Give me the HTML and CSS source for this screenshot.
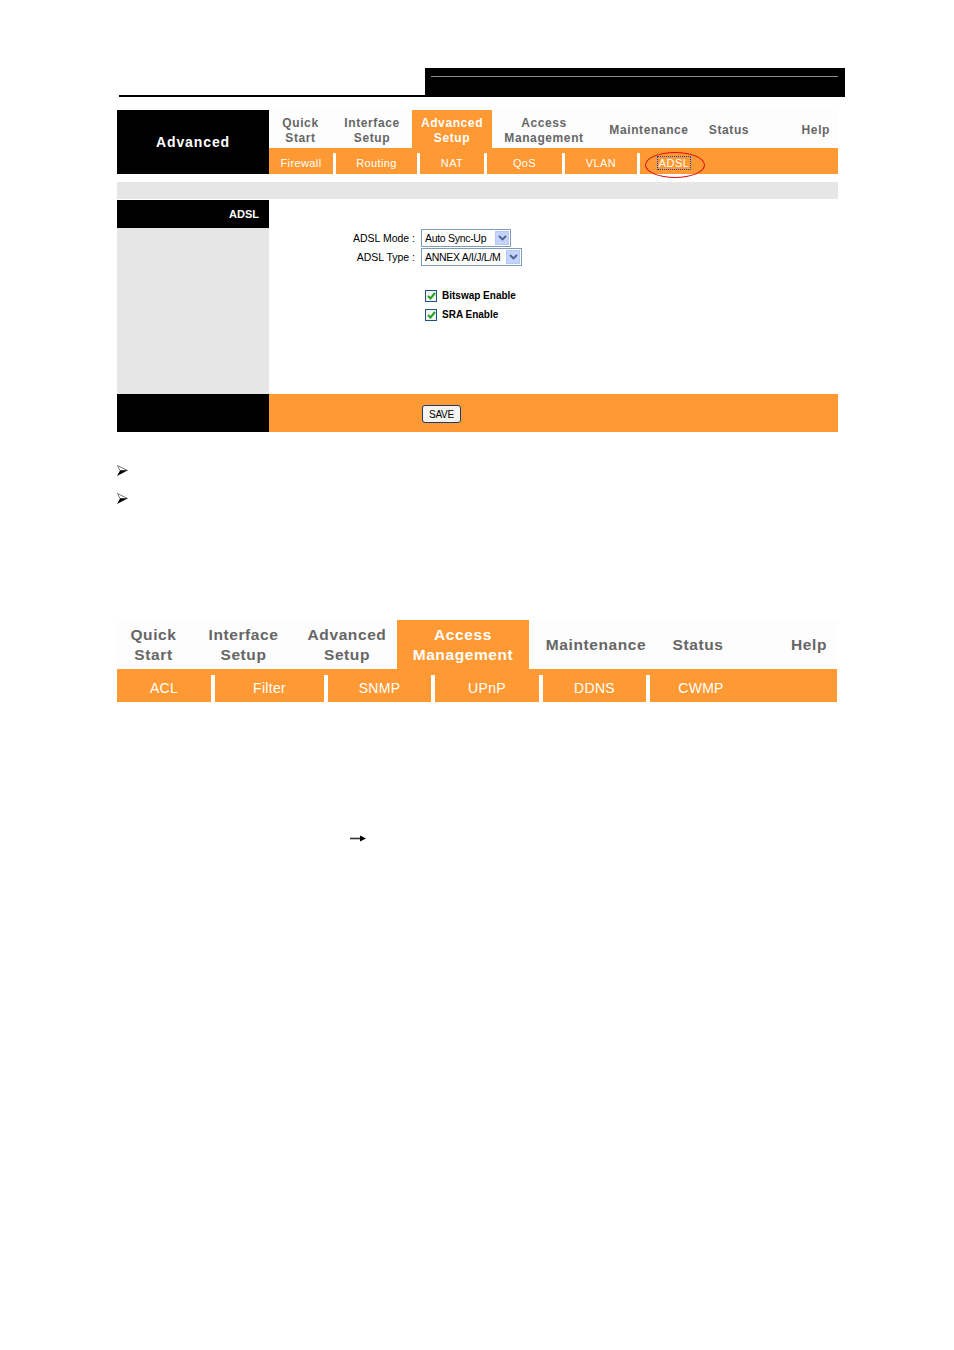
FILE: index.html
```html
<!DOCTYPE html>
<html>
<head>
<meta charset="utf-8">
<link rel="stylesheet" href="styles.css">
</head>
<body>
<div class="page">
  <div class="topbar">
    <div class="topbar-left"></div>
    <div class="topbar-right"><div class="topbar-line"></div></div>
  </div>

  <div class="shot1">
    <div class="header">
      <div class="brand">Advanced</div>
      <div class="menus">
        <div class="nav">
          <div class="nav-item w1">Quick<br>Start</div>
          <div class="nav-item w2">Interface<br>Setup</div>
          <div class="nav-item w3 active">Advanced<br>Setup</div>
          <div class="nav-item w4">Access<br>Management</div>
          <div class="nav-item w5">Maintenance</div>
          <div class="nav-item w6">Status</div>
          <div class="nav-item w7 right">Help</div>
        </div>
        <div class="subnav">
          <div class="sub-item s1">Firewall</div><span class="sep"></span>
          <div class="sub-item s2">Routing</div><span class="sep"></span>
          <div class="sub-item s3">NAT</div><span class="sep"></span>
          <div class="sub-item s4">QoS</div><span class="sep"></span>
          <div class="sub-item s5">VLAN</div><span class="sep"></span>
          <div class="sub-item s6"><span class="focus">ADSL</span><span class="ring"></span></div>
        </div>
      </div>
    </div>

    <div class="strip"></div>

    <div class="content">
      <div class="side">
        <div class="side-head">ADSL</div>
      </div>
      <div class="main">
        <div class="form-row row-first">
          <div class="label">ADSL Mode :</div>
          <div class="select sel-mode"><span class="sel-text">Auto Sync-Up</span><span class="sel-btn"><svg width="9" height="6" viewBox="0 0 9 6"><path d="M1 1 L4.5 4.5 L8 1" fill="none" stroke="#4d6185" stroke-width="1.8"/></svg></span></div>
        </div>
        <div class="form-row">
          <div class="label">ADSL Type :</div>
          <div class="select sel-type"><span class="sel-text">ANNEX A/I/J/L/M</span><span class="sel-btn"><svg width="9" height="6" viewBox="0 0 9 6"><path d="M1 1 L4.5 4.5 L8 1" fill="none" stroke="#4d6185" stroke-width="1.8"/></svg></span></div>
        </div>
        <div class="check-row check-first">
          <span class="box"><svg width="9" height="8" viewBox="0 0 9 8"><path d="M1 4 L3.5 6.5 L8 1" fill="none" stroke="#21a121" stroke-width="2"/></svg></span>
          <span class="check-label">Bitswap Enable</span>
        </div>
        <div class="check-row">
          <span class="box"><svg width="9" height="8" viewBox="0 0 9 8"><path d="M1 4 L3.5 6.5 L8 1" fill="none" stroke="#21a121" stroke-width="2"/></svg></span>
          <span class="check-label">SRA Enable</span>
        </div>
      </div>
    </div>

    <div class="footer">
      <div class="footer-side"></div>
      <div class="footer-main"><div class="save">SAVE</div></div>
    </div>
  </div>

  <div class="bullets">
    <div class="bullet"><svg width="11" height="11" viewBox="0 0 11 11"><path d="M0.5 0.5 L10.5 5.5 L3 5.5 Z" fill="#fff" stroke="#555" stroke-width="0.8"/><path d="M0 11 L10.5 5.5 L3 5.5 Z" fill="#000"/></svg></div>
    <div class="bullet"><svg width="11" height="11" viewBox="0 0 11 11"><path d="M0.5 0.5 L10.5 5.5 L3 5.5 Z" fill="#fff" stroke="#555" stroke-width="0.8"/><path d="M0 11 L10.5 5.5 L3 5.5 Z" fill="#000"/></svg></div>
  </div>

  <div class="shot2">
    <div class="nav2">
      <div class="nav2-item v1">Quick<br>Start</div>
      <div class="nav2-item v2">Interface<br>Setup</div>
      <div class="nav2-item v3">Advanced<br>Setup</div>
      <div class="nav2-item v4 active">Access<br>Management</div>
      <div class="nav2-item v5">Maintenance</div>
      <div class="nav2-item v6">Status</div>
      <div class="nav2-item v7 right">Help</div>
    </div>
    <div class="subnav2">
      <div class="sub2-item t1">ACL</div><span class="sep2"></span>
      <div class="sub2-item t2">Filter</div><span class="sep2"></span>
      <div class="sub2-item t3">SNMP</div><span class="sep2"></span>
      <div class="sub2-item t4">UPnP</div><span class="sep2"></span>
      <div class="sub2-item t5">DDNS</div><span class="sep2"></span>
      <div class="sub2-item t6">CWMP</div>
    </div>
  </div>

  <div class="arrow-line">
    <svg width="17" height="7" viewBox="0 0 17 7"><path d="M0 3.5 H11" stroke="#333" stroke-width="1.6"/><path d="M10 0.5 L16 3.5 L10 6.5 Z" fill="#000"/></svg>
  </div>
</div>
</body>
</html>
```

FILE: styles.css
```css
html, body {
  margin: 0;
  padding: 0;
  background: #fff;
}
.page {
  width: 954px;
  height: 1350px;
  font-family: "Liberation Sans", Arial, sans-serif;
  padding-top: 68px;
  box-sizing: border-box;
}

/* top bar */
.topbar {
  display: flex;
  margin-left: 119px;
  width: 726px;
  height: 29px;
}
.topbar-left {
  width: 306px;
  height: 27px;
  border-bottom: 2px solid #000;
}
.topbar-right {
  width: 420px;
  height: 29px;
  background: #000;
  padding: 8px 7px 0 6px;
  box-sizing: border-box;
}
.topbar-line {
  height: 1px;
  background: #8a8a8a;
}

/* first screenshot */
.shot1 {
  margin-left: 117px;
  margin-top: 13px;
  width: 721px;
}
.header {
  display: flex;
  height: 64px;
}
.brand {
  width: 152px;
  background: #000;
  color: #fff;
  font-weight: bold;
  font-size: 14px;
  letter-spacing: 0.9px;
  display: flex;
  align-items: center;
  justify-content: center;
  box-sizing: border-box;
}
.menus {
  width: 569px;
  display: flex;
  flex-direction: column;
}
.nav {
  display: flex;
  height: 38px;
  background: #fdfdfd;
}
.nav-item {
  display: flex;
  align-items: center;
  justify-content: center;
  text-align: center;
  color: #666;
  font-weight: bold;
  font-size: 12px;
  line-height: 15px;
  letter-spacing: 0.6px;
  padding-top: 3px;
  box-sizing: border-box;
}
.nav-item.active {
  background: #ff9933;
  color: #fff;
}
.nav-item.right {
  justify-content: flex-end;
  padding-right: 8px;
}
.w1 { width: 63px; }
.w2 { width: 80px; }
.w3 { width: 80px; }
.w4 { width: 104px; }
.w5 { width: 106px; }
.w6 { width: 54px; }
.w7 { width: 82px; }

.subnav {
  display: flex;
  height: 26px;
  background: #ff9933;
}
.sub-item {
  display: flex;
  align-items: center;
  justify-content: center;
  color: #fff;
  font-size: 11px;
  letter-spacing: 0.4px;
  padding-top: 4px;
  box-sizing: border-box;
  position: relative;
}
.sep {
  width: 3px;
  height: 21px;
  margin-top: 5px;
  background: #fff;
}
.s1 { width: 64px; }
.s2 { width: 81px; }
.s3 { width: 64px; }
.s4 { width: 75px; }
.s5 { width: 72px; }
.s6 { width: 68px; }
.focus {
  outline: 1px dotted #1a3fd0;
  outline-offset: 0;
  line-height: 12px;
  padding: 0 1px;
}
.ring {
  position: absolute;
  left: 5px;
  top: 4px;
  width: 60px;
  height: 26px;
  border: 1.5px solid #e01010;
  border-radius: 50%;
  box-sizing: border-box;
}

.strip {
  margin-top: 8px;
  height: 17px;
  background: #e6e6e6;
  margin-bottom: 1px;
}

.content {
  display: flex;
  height: 194px;
}
.side {
  width: 152px;
  background: #e6e6e6;
}
.side-head {
  height: 28px;
  background: #000;
  color: #fff;
  font-weight: bold;
  font-size: 11px;
  text-align: right;
  padding-right: 10px;
  line-height: 28px;
  box-sizing: border-box;
}
.main {
  flex: 1;
  background: #fff;
  display: flex;
  flex-direction: column;
}
.form-row {
  display: flex;
  align-items: center;
  height: 19px;
}
.row-first {
  margin-top: 28px;
}
.label {
  width: 152px;
  text-align: right;
  font-size: 10.5px;
  color: #000;
  padding-right: 6px;
  box-sizing: border-box;
}
.select {
  display: flex;
  align-items: center;
  height: 18px;
  border: 1px solid #7f9db9;
  box-sizing: border-box;
  background: #fff;
  padding-left: 3px;
}
.sel-mode { width: 90px; }
.sel-type { width: 101px; }
.sel-text {
  flex: 1;
  font-size: 10.5px;
  color: #000;
  white-space: nowrap;
  letter-spacing: -0.3px;
}
.sel-btn {
  width: 14px;
  height: 14px;
  margin-right: 1px;
  background: #c3d3fd;
  border: 1px solid #b6c8f5;
  box-sizing: border-box;
  display: flex;
  align-items: center;
  justify-content: center;
}
.check-row {
  display: flex;
  align-items: center;
  height: 19px;
  margin-left: 156px;
}
.check-first {
  margin-top: 20px;
}
.box {
  width: 12px;
  height: 12px;
  border: 1px solid #1c5180;
  box-sizing: border-box;
  background: #f2f2ee;
  display: flex;
  align-items: center;
  justify-content: center;
}
.check-label {
  margin-left: 5px;
  font-weight: bold;
  font-size: 10px;
  color: #000;
}

.footer {
  display: flex;
  height: 38px;
}
.footer-side {
  width: 152px;
  background: #000;
}
.footer-main {
  flex: 1;
  background: #ff9933;
  padding-left: 153px;
  padding-top: 11px;
  box-sizing: border-box;
}
.save {
  width: 39px;
  height: 18px;
  border: 1px solid #1c3c6e;
  border-radius: 3px;
  background: #f4f4f0;
  box-sizing: border-box;
  font-size: 10px;
  color: #000;
  display: flex;
  align-items: center;
  justify-content: center;
  letter-spacing: -0.2px;
}

/* bullets */
.bullets {
  margin-left: 117px;
  margin-top: 33px;
}
.bullet {
  height: 28px;
  line-height: 0;
}

/* second screenshot */
.shot2 {
  margin-left: 117px;
  margin-top: 99px;
  width: 720px;
}
.nav2 {
  display: flex;
  height: 49px;
  background: #fdfdfd;
}
.nav2-item {
  display: flex;
  align-items: center;
  justify-content: center;
  text-align: center;
  color: #666;
  font-weight: bold;
  font-size: 15.5px;
  line-height: 20px;
  letter-spacing: 0.6px;
  padding-top: 1px;
  box-sizing: border-box;
}
.nav2-item.active {
  background: #ff9933;
  color: #fff;
}
.nav2-item.right {
  justify-content: flex-end;
  padding-right: 10px;
}
.v1 { width: 73px; }
.v2 { width: 107px; }
.v3 { width: 100px; }
.v4 { width: 132px; }
.v5 { width: 134px; }
.v6 { width: 70px; }
.v7 { width: 104px; }
.subnav2 {
  display: flex;
  height: 33px;
  background: #ff9933;
}
.sub2-item {
  display: flex;
  align-items: center;
  justify-content: center;
  color: #fff;
  font-size: 14px;
  letter-spacing: 0.3px;
  padding-top: 4px;
  box-sizing: border-box;
}
.sep2 {
  width: 4px;
  height: 27px;
  margin-top: 6px;
  background: #fff;
}
.t1 { width: 94px; }
.t2 { width: 109px; }
.t3 { width: 103px; }
.t4 { width: 104px; }
.t5 { width: 103px; }
.t6 { width: 102px; }

.arrow-line {
  margin-left: 350px;
  margin-top: 133px;
  height: 7px;
  line-height: 0;
}
```
